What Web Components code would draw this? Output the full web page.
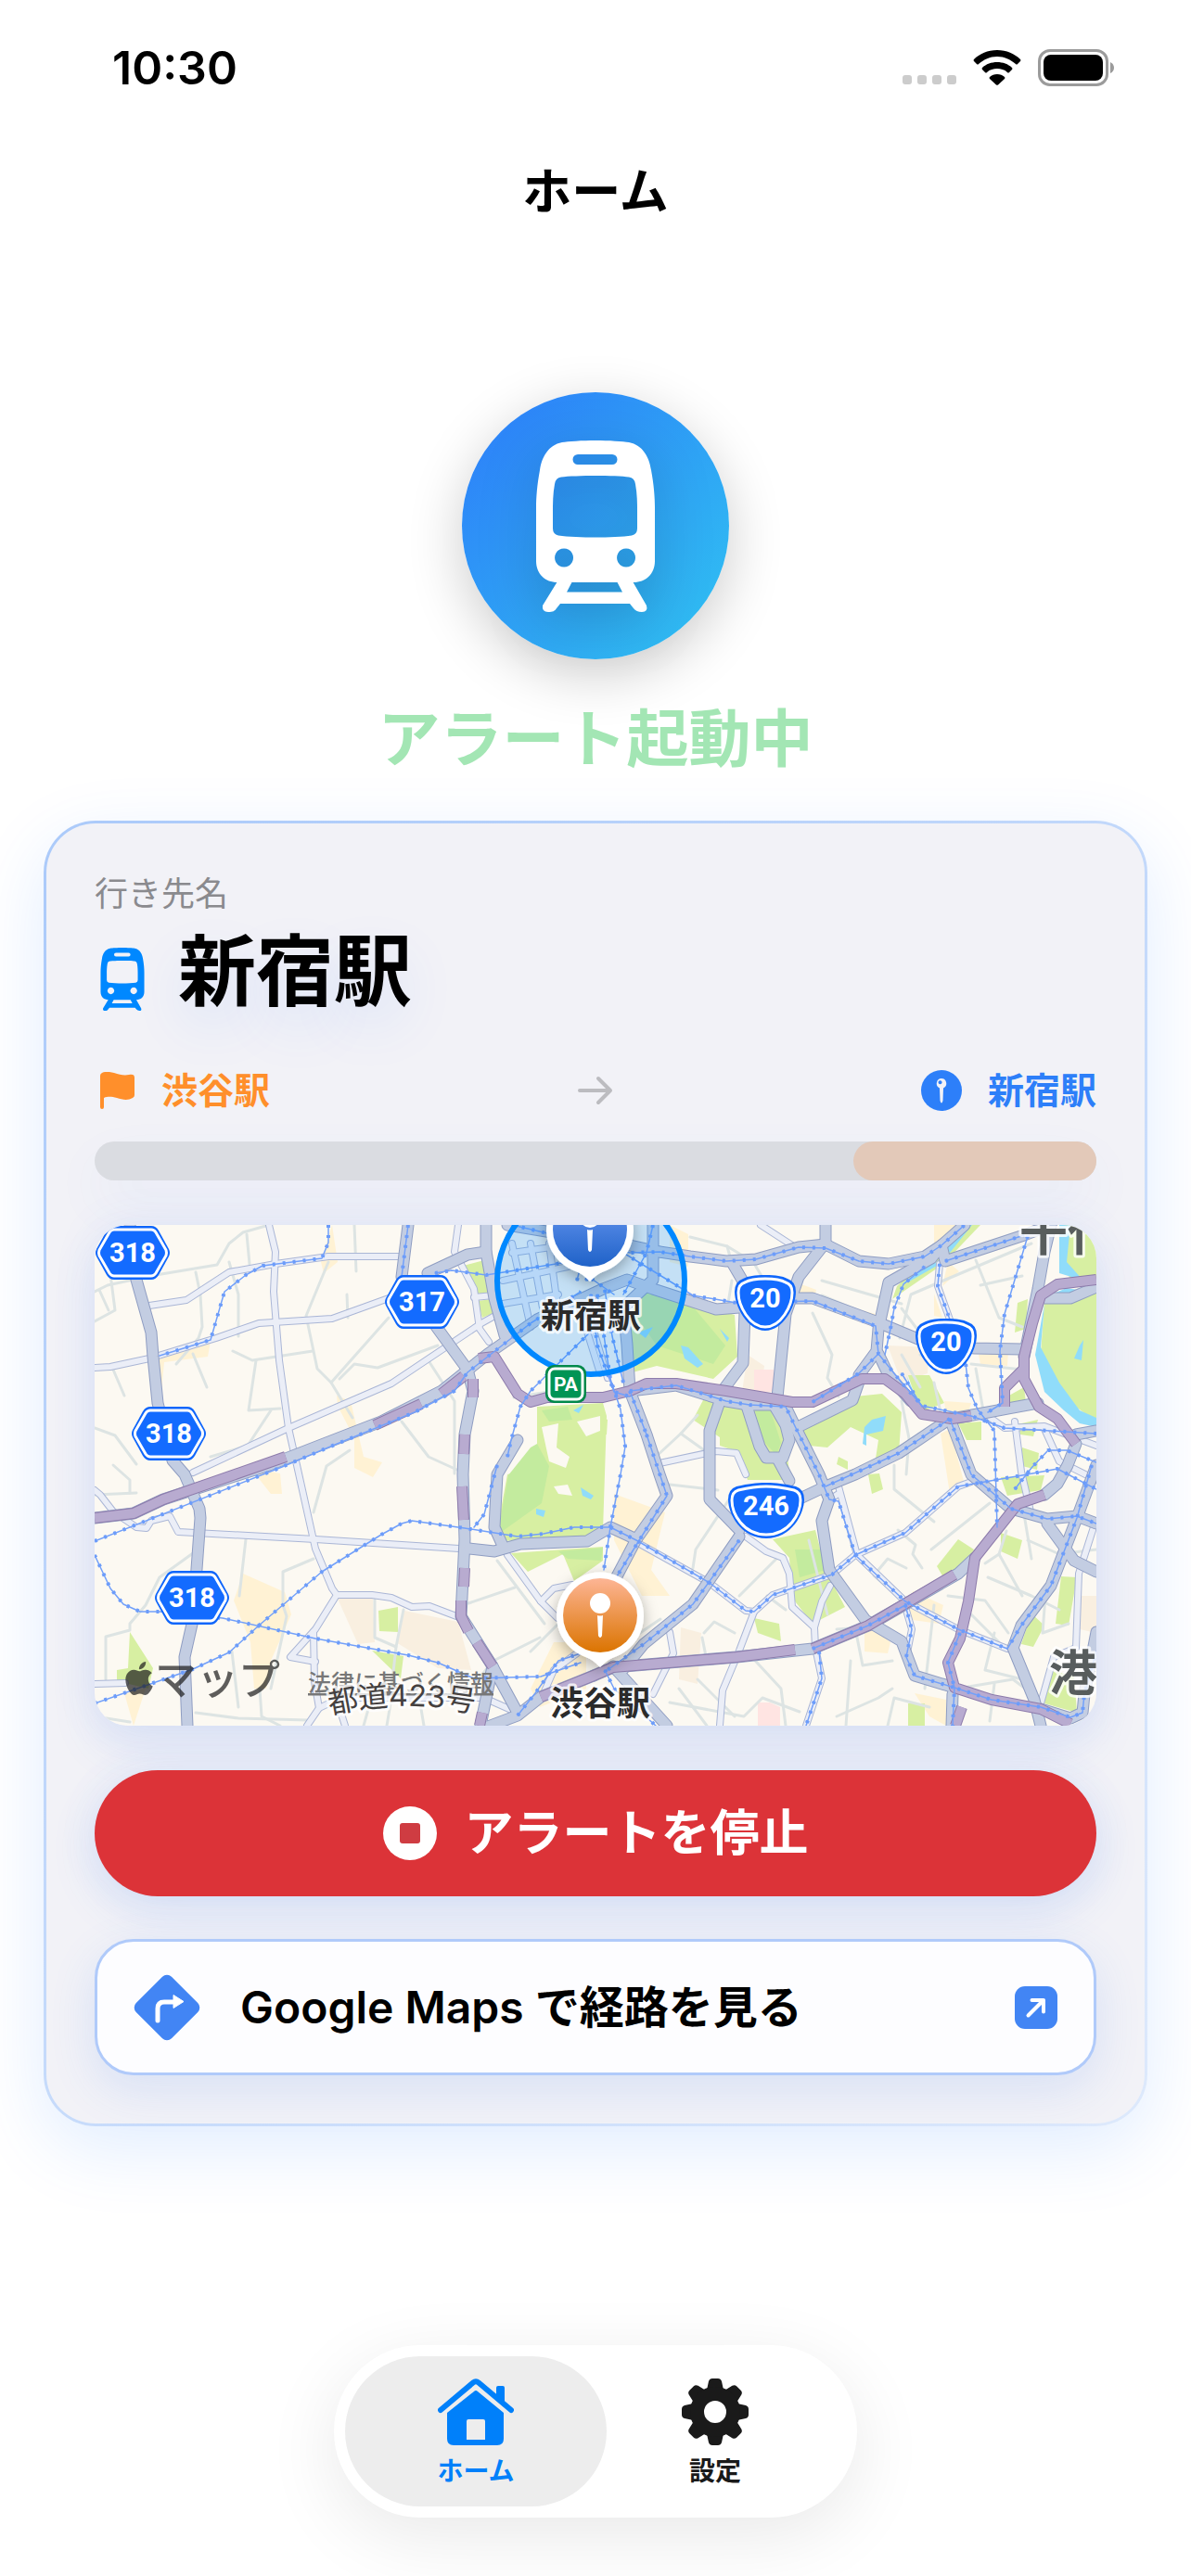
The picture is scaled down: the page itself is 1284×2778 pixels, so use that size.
<!DOCTYPE html>
<html lang="ja">
<head>
<meta charset="UTF-8">
<meta name="viewport" content="width=device-width, initial-scale=1">
<title>ホーム</title>
<style>
    body{
        margin: 0;
        min-height: 100vh;
        display: flex;
        flex-direction: column;
        background: #fff;
        color: #000;
        font-family: Inter, "Noto Sans CJK JP", sans-serif;
    }
    main{
        display: flex;
        flex-direction: column;
        align-items: center;
    }
    alert-hero{
        margin-top: 186px;
    }
    trip-card{
        align-self: stretch;
        margin: 46px 47px 0;
    }
    tab-bar{
        margin: auto auto 63px;
    }
</style>
</head>
<body>
    <status-bar time="10:30"></status-bar>
    <page-title>ホーム</page-title>
    <main>
        <alert-hero>アラート起動中</alert-hero>
        <trip-card>
            <destination-name label="行き先名">新宿駅</destination-name>
            <route-progress from="渋谷駅" to="新宿駅"></route-progress>
            <route-map from="渋谷駅" to="新宿駅"></route-map>
            <stop-button>アラートを停止</stop-button>
            <maps-link href="#route">Google Maps で経路を見る</maps-link>
        </trip-card>
    </main>
    <tab-bar>
        <tab-item icon="home" active>ホーム</tab-item>
        <tab-item icon="gear">設定</tab-item>
    </tab-bar>

<script>
const ICONS = {
    train: `
        <svg viewBox="0 0 128 185" fill="currentColor" aria-hidden="true">
            <path fill-rule="evenodd" d="M64 0C78 0 94 1 100 2C115 5 122 18 124 32C127 48 128 62 128 72V130C128 144 118 153 105 153H23C10 153 0 144 0 130V72C0 62 1 48 4 32C6 18 13 5 28 2C34 1 50 0 64 0ZM45 15a5.500 5.500 0 0 0 0 11H82a5.500 5.500 0 0 0 0-11ZM64 38C50 38 34 38.500 27 39.500Q21 40 20 47C18 58 18 68 18 76V95Q18 101 24 102.500C34 104 50 104.500 64 104.500S94 104 103 102.500Q109 101 109 95V76C109 68 109 58 107 47Q106 40 100 39.500C94 38.500 78 38 64 38ZM30 116.500a10 10 0 1 0 .1 0ZM97 116.500a10 10 0 1 0 .1 0Z"/>
            <path d="M23 152L7 178Q6 185 13 185C18 185 20 184 22 181L26 176H101L105 181Q108 185 114 185Q121 185 119 178L104 152H87L93 163.500H33L39 152Z"/>
        </svg>`,
    flag: `
        <svg viewBox="0 0 38 40" fill="currentColor" aria-hidden="true">
            <path d="M0 4Q0 2 2 1C6-1 11 0 15 1C21 3 26 4 31 3C35 2 37 3 37 6V25Q37 27 35 28C30 31 24 30 18 28C13 27 9 26 4 28V38Q4 40 2 40T0 38Z"/>
        </svg>`,
    arrow: `
        <svg viewBox="0 0 38 32" fill="none" stroke="currentColor" stroke-width="4" stroke-linecap="round" stroke-linejoin="round" aria-hidden="true">
            <path d="M2 16H35M22 3L35 16L22 29"/>
        </svg>`,
    pin: `
        <svg viewBox="0 0 44 44" aria-hidden="true">
            <circle cx="22" cy="22" r="22" fill="currentColor"/>
            <path fill="#f2f2f7" fill-rule="evenodd" d="M22 9a5.500 5.500 0 0 1 2 10.500L23.500 33Q22 38 20.500 33L20 19.500A5.500 5.500 0 0 1 22 9ZM20.500 11.300a2 2 0 1 0 .1 0Z"/>
        </svg>`,
    stop: `
        <svg viewBox="0 0 58 58" aria-hidden="true">
            <circle cx="29" cy="29" r="29" fill="#fff"/>
            <rect x="18" y="18" width="22" height="22" rx="3" fill="#cf3c42"/>
        </svg>`,
    directions: `
        <svg viewBox="0 0 74 74" aria-hidden="true">
            <rect x="10" y="10" width="54" height="54" rx="7" fill="#4285f4" transform="rotate(45 37 37)"/>
            <path d="M27 51V38Q27 31 34 31H44" fill="none" stroke="#fff" stroke-width="5" stroke-linecap="round"/>
            <path d="M44 23.500L55 30.500L44 37.500Z" fill="#fff" stroke="#fff" stroke-linejoin="round"/>
        </svg>`,
    open: `
        <svg viewBox="0 0 46 46" aria-hidden="true">
            <rect width="46" height="46" rx="11" fill="#4285f4"/>
            <path d="M14.500 31.500L31 15M18.500 15H31V27.500" fill="none" stroke="#fff" stroke-width="4" stroke-linecap="round" stroke-linejoin="round"/>
        </svg>`,
    home: `
        <svg viewBox="0 0 82 72" fill="currentColor" aria-hidden="true">
            <path d="M3 34L38 4.500Q41 2 44 4.500L79 34" fill="none" stroke="currentColor" stroke-width="6" stroke-linecap="round"/>
            <path d="M63 22V10Q63 8 65 8H70Q72 8 72 10V30Z"/>
            <path fill-rule="evenodd" d="M39 14Q41 12 43 14L71 37V65Q71 72 64 72H17Q10 72 10 65V37ZM33 44Q31 44 31 46V66H51V46Q51 44 49 44Z"/>
        </svg>`,
    gear: `
        <svg viewBox="-36 -36 72 72" fill="currentColor" aria-hidden="true">
            ${[0, 45, 90, 135, 180, 225, 270, 315].map(a => `<path transform="rotate(${a})" d="M-12 -20Q-9 -23 -8.500 -26L-7 -33Q-6 -36 -3 -36H3Q6 -36 7 -33L8.500 -26Q9 -23 12 -20Z"/>`).join('')}
            <circle r="19.500" fill="none" stroke="currentColor" stroke-width="15"/>
        </svg>`
}

// puntos de las calles, en el sistema 1080x540 del mapa
const STREETS = [
    '0,72 14,65 60,55 132,43 145,20 160,8 188,0', '16,45 22,92 0,104', '5,70 15,92', '109,51 114,75 116,110 112,122 88,150',
    '164,10 167,42', '145,40 155,75 155,120', '280,0 282,50', '252,40 228,98 240,155 255,170 278,208', '272,75 273,100',
    '317,100 255,170', '149,136 170,146 235,136', '174,146 166,200 200,198', '264,166 280,150 305,154 370,130',
    '106,139 121,175', '20,156 32,184', '125,250 165,238 190,200', '331,212 360,250 395,266', '0,219 22,227 45,258',
    '275,243 250,260 236,310', '361,148 388,190 388,268', '163,339 156,400', '106,354 70,380 55,410 38,430 38,437 12,444 12,490',
    '236,360 203,374 203,410 207,422 190,500', '148,460 155,520', '302,402 302,445 325,455 333,415', '325,455 320,500',
    '0,530 38,536', '109,526 155,532 230,534', '178,500 180,530 200,540', '300,505 290,540', '320,510 315,540', '350,510 355,540',
    '403,408 453,391', '434,362 485,430', '405,500 430,470 480,445', '500,430 470,460', '452,186 520,175',
    '642,13 682,23 710,40 722,60', '682,23 687,42', '687,60 682,90', '784,76 850,104', '784,60 870,85', '774,95 795,140 790,165 802,185',
    '868,122 880,75 915,60 1010,20', '870,90 900,130', '950,38 975,100 1000,110', '955,65 1000,55', '890,140 930,125',
    '945,150 1000,156', '950,155 958,200', '870,140 890,175', '905,170 915,215', '605,250 632,225 660,245', '632,225 650,205',
    '870,190 878,230 875,269', '862,259 862,285 905,320', '866,329 885,345 882,355 892,370', '902,350 965,300', '960,365 975,355 1000,400',
    '866,400 840,378 855,360 875,370', '770,340 790,420', '620,280 672,286', '645,370 648,350 688,290', '695,400 735,360',
    '657,440 668,428 690,440', '655,445 660,470', '905,410 895,500', '920,400 960,405 985,440', '963,380 1010,400 1040,415',
    '945,420 975,450', '800,436 830,434', '1006,340 1040,355 1080,350', '983,330 975,355', '1025,400 1022,440 1050,430',
    '630,500 660,540', '650,490 690,530', '620,515 700,530 720,510 760,525', '815,470 810,540', '820,435 828,475 860,470',
    '860,500 845,510 800,530', '855,540 862,510 900,520', '930,500 990,490 1010,505', '970,495 965,535', '703,460 740,500 745,540',
    '745,415 725,400', '588,440 610,425', '1000,300 1010,360', '970,440 960,480 1000,490', '0,291 45,289', '20,259 38,275 38,289'
]

const LANES = [
    '59,87 99,81 145,51 195,42 252,34 327,34', '0,154 17,153 59,144 131,122 177,106 256,101 317,79',
    '188,0 195,29 193,72 199,146 209,219 218,259 238,349 256,392 261,399 238,436 211,466 238,471',
    '236,439 237,492 242,521 229,540', '242,521 265,510 420,510 456,526', '106,267 209,219 320,171 417,106 435,96',
    '392,0 388,29 409,69 415,112 425,126', '409,78 430,76', '0,286 6,291 20,309 45,326 56,327 61,319 81,314 90,331 238,339 393,349',
    '261,399 299,399 320,402 342,412 361,411 390,422', '0,495 33,494', '445,356 481,406 499,424', '481,406 495,392 515,388',
    '262,515 270,540', '584,342 663,386 702,416 711,417 731,399 795,377 820,356 874,332 931,282 945,277',
    '702,336 724,352 742,359 749,376 752,412 776,434 777,456 784,489 767,540', '776,434 784,406 793,389',
    '802,282 822,356 874,406 931,436 984,457', '711,417 695,459 677,502 674,540', '911,42 909,66 922,102',
    '963,206 981,219 1024,217 1080,238', '992,212 999,266 1009,309', '1077,326 1061,376 1058,456 1034,466 1020,516',
    '609,257 670,244 692,246 702,269', '874,412 881,436 875,466', '718,0 752,22', '620,439 624,462 602,506',
    '481,512 495,480 520,462', '1024,220 1040,255 1080,275', '450,20 470,110', '470,20 485,100', '490,20 500,95',
    '440,60 510,45', '440,85 500,75', '450,30 520,20', '520,80 545,160', '528,80 553,165', '792,296 802,290'
]

const ROADS = [
    '38,0 45,59 61,116 63,142 68,192 84,254 97,269 113,306 114,316 106,426 97,466 100,540',
    '338,0 331,56 370,112 402,156 408,179 399,226 397,269 399,339 395,422 429,476 425,496 416,540', '429,476 456,526',
    '0,316 42,311 74,296 188,259 309,212 374,179 424,139 477,102 548,69 574,59 602,69 670,91 695,89 752,79 774,79 842,104 895,126 949,133 999,134',
    '577,179 627,173 681,190 705,194 745,194', '924,209 963,202 1017,192',
    '609,29 642,34 681,39 713,37 759,24 788,21 824,39 856,42 895,34 913,22 938,0',
    '422,0 422,29 431,79 442,119', '359,52 402,32 422,29', '445,0 577,22 609,29',
    '602,0 602,59 570,89 574,129 577,179 595,226 609,269 617,292 584,339 563,379 560,420',
    '788,0 788,19 759,56 745,96 736,186', '688,42 702,66 699,149 679,176 663,222 663,296 695,329',
    '695,336 645,409 592,452 570,479', '702,192 717,239 724,251 742,251 749,232 745,216 731,192', '736,252 749,276',
    '745,196 756,219 781,269 792,296 784,319 792,372 831,426 870,449 884,486 927,499', '756,219 817,189 824,169',
    '922,209 867,246 820,269 788,282 750,300', '922,209 945,269 988,306 1027,317 1059,314 1080,322',
    '1080,259 1059,316 1031,389 999,432 990,456 1013,512 1020,540', '1027,322 1056,362 1080,374',
    '925,506 924,540', '1020,522 1052,532 1065,526 1067,506 1080,439',
    '913,22 902,36 856,62 845,112 843,136 824,162', '845,139 856,162 880,190', '913,22 917,39 1002,11 1031,0',
    '1031,0 1024,29 1017,69 1002,142', '1024,79 1052,79 1080,67', '1058,226 1080,222',
    '1058,236 1049,259 1038,279 1024,291', '404,349 431,352 459,344 531,341 556,326 584,339',
    '456,232 434,269 431,326 440,346', '559,476 617,540', '416,544 456,529 481,509 538,486',
    '538,486 559,477 692,466 774,457 834,432 931,376 949,359'
]

const EXPRESSWAYS = [
    '0,316 42,311 74,296 206,250', '302,216 352,193', '374,182 398,163', '414,144 431,142 456,182 470,191 488,186 548,186 577,179 595,171 627,171 681,179 752,191 774,191 827,166 852,166 874,182 892,204 924,209 945,206',
    '408,166 408,186', '399,226 398,247', '396,282 398,318', '399,370 398,390', '395,405 395,422 403,438', '412,450 429,476',
    '1080,59 1038,64 1020,76 1011,106 1002,142 1002,166 1018,196 1038,209 1058,236',
    '1024,291 995,301 949,359 942,406 933,446 920,472 927,499 967,512 1020,522 1052,538',
    '481,509 538,486 559,477 692,466 755,458', '774,457 834,432 927,377', '981,196 981,176 1002,155', '935,520 928,540', '418,526 415,540'
]

const RAILS = [
    '252,0 252,19 245,36 181,44 163,54 140,72 125,124 70,141', '0,341 202,261 259,237 345,202 388,179 402,159 470,106 524,72',
    '0,356 17,392 31,409 49,417 70,417 138,424 238,446 338,464 370,472 409,489 481,487 524,472',
    '0,516 106,479 145,461 177,432 245,374 309,334 331,322 342,319 399,327 456,336 484,333 517,326 556,326 584,340 663,386 702,416 711,417 731,399 795,377 820,356 874,332 931,282 1000,270 1038,263 1080,285',
    '338,0 331,56', '367,52 385,49 422,54 510,40 560,75', '445,250 449,232 459,196 470,179 548,102', '434,259 420,312 409,326',
    '450,0 577,30 609,29 642,34 681,39 713,37 759,24 788,25 824,39 856,42 895,34 913,22 938,0',
    '542,75 548,112 556,166 567,199 572,239 567,269 556,326 549,372', '535,75 542,130 560,180 577,185', '550,70 558,120 570,170',
    '602,0 595,30 570,75', '570,30 645,76 692,84 774,82 842,109 845,139 870,170 892,195 945,206 981,219 1080,225',
    '577,179 627,173 681,190 706,194 745,196 756,219 781,269 792,296 802,298 820,356 874,406 931,436 984,457',
    '595,226 617,292 563,379', '695,340 645,409 592,452 550,482', '577,179 595,226',
    '917,39 1002,11', '911,42 909,66 922,102', '1006,12 981,96 976,136 979,192 963,202', '938,139 942,176 952,199 970,222 973,326',
    '922,209 945,269 988,306 1027,317 1059,314 1080,322', '922,209 867,246 788,282', '1075,259 1059,316 1031,389 999,432 984,457',
    '933,440 920,472 927,499 967,512 1020,520 1052,531 1065,526 1067,506 1080,460', '774,457 834,432 874,410 881,436 875,466 884,486 927,499 925,540',
    '781,460 784,489 767,540', '895,45 872,64 862,90 858,112 852,140', '870,160 892,196', '992,285 1010,262 1028,243 1048,243 1080,256',
    '774,191 824,160 845,139', '456,529 475,505 500,470 530,460', '550,480 560,500 605,540', '520,60 535,0', '530,60 550,0'
]

const PARKS = [
    '477,196 548,192 552,206 548,330 531,336 438,341 434,329 445,269 456,266 477,252', '449,354 548,347 548,362 517,384 505,355 467,374',
    '592,69 690,97 693,142 667,166 606,152 580,159 570,110', '656,189 740,192 750,275 704,275 692,244 674,238 674,229 645,210',
    '759,226 788,199 820,185 849,182 870,202 867,246 842,252 845,232 815,218 790,240 770,238', '1024,82 1080,72 1080,212 1052,192 1020,139',
    '1040,0 1080,0 1080,66 1052,62 1045,30', '731,339 777,329 788,372 809,412 774,430 752,402 749,359', '711,424 738,430 740,449 715,440',
    '931,339 948,350 940,366 915,380 908,368', '977,332 1000,340 995,360 977,352', '1042,379 1059,380 1050,432 1036,430',
    '1010,419 1024,432 1012,455 999,452', '1028,480 1056,486 1059,526 1024,516', '977,272 1024,270 1020,286 984,292', '877,516 895,516 895,540 877,540',
    '834,269 846,268 850,285 838,290', '306,416 327,412 327,439 307,438', '38,439 63,478 58,500 24,492 24,480 36,478', '299,459 333,465 330,489',
    '397,44 420,38 426,74 412,74', '413,82 428,80 430,95 418,100', '877,162 900,162 916,192 890,202', '995,84 1006,80 1004,112 992,116',
    '984,185 1002,175 1004,192 984,194', '931,214 956,212 956,232 940,232', '995,215 1017,210 1012,228 998,226', '1000,240 1018,246 1016,264 1000,260',
    '538,204 553,210 552,226 538,228', '935,0 955,0 915,42 860,80 865,66', '802,250 812,255 812,264 800,258'
]

const WOODS = [
    '477,236 490,260 482,300 440,330 436,326 446,270 470,240', '592,69 640,82 680,130 667,150 606,130 585,100', '712,200 728,198 740,235 735,248 720,232',
    '755,350 785,350 788,372 760,380', '500,352 548,348 546,362 510,360', '482,200 510,196 515,210 490,212'
]

const WATER = [
    '1024,85 1014,140 1024,180 1045,200 1062,214 1080,218 1080,208 1062,200 1040,170 1020,132', '1040,0 1052,0 1048,40 1066,60 1040,52',
    '632,130 640,132 656,150 650,154 636,144', '674,112 684,122 682,126', '830,218 838,210 853,206 850,222 832,226 832,238 828,236',
    '937,0 946,0 922,30 918,24', '905,36 870,64 880,60 908,44', '1062,130 1066,124 1064,146 1056,144', '516,200 527,194 522,203', '524,283 538,292 535,296 526,292',
    '476,306 486,308 484,315 476,312', '1024,78 1048,68 1060,70 1040,78', '875,162 892,200 920,203 890,206', '586,116 602,110 594,122', '539,175 548,172'
]

const BUILTUP = [
    '256,0 262,40 247,52 244,40', '62,143 125,125 122,142 75,148 72,180', '261,184 276,190 290,250 310,256 300,272 280,262 280,230 262,195',
    '160,376 205,396 212,420 190,470 185,500 172,500 168,450 150,405', '168,262 200,268 202,290 190,290', '560,290 615,310 600,372 620,400 590,400 560,340',
    '495,450 530,450 530,500 480,520 470,500', '757,62 778,70 776,78 755,76', '620,0 640,10 640,45 620,40', '905,0 935,0 925,18 905,20', '920,40 932,50 914,66',
    '812,88 842,96 840,108 815,100', '905,74 914,100 905,98', '916,190 945,192 940,208 918,206', '912,225 922,220 938,280 922,290',
    '953,140 985,136 984,152 955,150', '830,430 858,450 855,462 830,460', '884,505 918,512 918,540 900,530', '882,395 915,410 910,430 875,425', '32,505 55,500 42,540'
]

const SCHOOLS = [
    '262,403 300,402 302,450 284,452', '334,416 392,428 406,480 370,478 325,450', '632,434 654,440 650,495 630,490',
    '704,140 722,152 718,180 698,180', '855,130 900,132 898,160 870,170', '1062,400 1080,400 1080,440 1062,436'
]

const lines = (list) => list.map(points => `<polyline points="${points}"/>`).join('')
const areas = (list) => list.map(points => `<polygon points="${points}"/>`).join('')

class AppElement extends HTMLElement {

    constructor(){
        super();
        this.attachShadow({mode:'open'});
    }
    getTemplate(){
        const template = document.createElement('template')
        template.innerHTML = `${this.getMarkup()}<style>${this.getStyles()}</style>`;
        return template;
    }
    attr(name){
        return this.getAttribute(name) || ''
    }
    render(){
        this.shadowRoot.replaceChildren(this.getTemplate().content.cloneNode(true))
    }
    connectedCallback(){
        this.render();
    }
}

class StatusBar extends AppElement {

    getMarkup(){
        return `
            <time>${this.attr('time')}</time>
            <div class="icons">
                <svg width="58" height="40" viewBox="0 0 58 40" fill="#ccc" aria-hidden="true">
                    <rect y="28" width="10" height="10" rx="3"/>
                    <rect x="16" y="28" width="10" height="10" rx="3"/>
                    <rect x="32" y="28" width="10" height="10" rx="3"/>
                    <rect x="48" y="28" width="10" height="10" rx="3"/>
                </svg>
                <svg width="52" height="40" viewBox="0 0 52 40" aria-hidden="true">
                    <path d="M26 1C36 1 45 5 51 11Q52 12 51 13L48 16Q47 17 46 16C40 11 34 8 26 8S12 11 6 16Q5 17 4 16L1 13Q0 12 1 11C7 5 16 1 26 1Z"/>
                    <path d="M26 14C32 14 38 16 42 20Q43 21 42 22L39 25Q38 26 37 25C34 22 30 21 26 21S18 22 15 25Q14 26 13 25L10 22Q9 21 10 20C14 16 20 14 26 14Z"/>
                    <path d="M26 27C29 27 32 28 34 30Q35 31 34 32L27 38.500Q26 39 25 38.500L18 32Q17 31 18 30C20 28 23 27 26 27Z"/>
                </svg>
                <svg width="82" height="40" viewBox="0 0 82 40" aria-hidden="true">
                    <rect x="1.500" y="1.500" width="73" height="37" rx="11.500" fill="none" stroke="#9b9b9b" stroke-width="3"/>
                    <rect x="6" y="6" width="64" height="28" rx="8"/>
                    <path d="M78 14Q82 16 82 20T78 26Z" fill="#9b9b9b"/>
                </svg>
            </div>
        `
    }
    getStyles(){
        return `
            :host{
                display: flex;
                justify-content: space-between;
                align-items: center;
                height: 64px;
                padding: 41px 83px 0 121px;
            }
            time{
                font-size: 50px;
                font-weight: 600;
                line-height: 64px;
            }
            .icons{
                display: flex;
                gap: 18px;
            }
        `
    }
}
customElements.define("status-bar", StatusBar)

class PageTitle extends AppElement {

    getMarkup(){
        return `<h1><slot></slot></h1>`
    }
    getStyles(){
        return `
            :host{
                display: block;
                padding-top: 72px;
            }
            h1{
                margin: 0;
                font-size: 53px;
                font-weight: 600;
                line-height: 60px;
                text-align: center;
            }
        `
    }
}
customElements.define("page-title", PageTitle)

class AlertHero extends AppElement {

    getMarkup(){
        return `
            <div class="badge">${ICONS.train}</div>
            <p><slot></slot></p>
        `
    }
    getStyles(){
        return `
            :host{
                display: flex;
                flex-direction: column;
                align-items: center;
                gap: 44px;
            }
            .badge{
                display: grid;
                place-items: center;
                width: 288px;
                height: 288px;
                border-radius: 50%;
                color: #fff;
                background: linear-gradient(135deg, #2d7ff9 5%, #30c0f2 95%);
                box-shadow: 0 16px 60px rgba(0,0,0,.2);
            }
            svg{
                width: 128px;
                height: 185px;
                filter: drop-shadow(0 16px 30px rgba(0,0,0,.2));
            }
            p{
                margin: 0;
                color: #a3e6b4;
                font-size: 67px;
                font-weight: 600;
                line-height: 84px;
            }
        `
    }
}
customElements.define("alert-hero", AlertHero)

class TripCard extends AppElement {

    getMarkup(){
        return `<slot></slot>`
    }
    getStyles(){
        return `
            :host{
                display: flex;
                flex-direction: column;
                padding: 52px;
                border: 3px solid transparent;
                border-radius: 56px;
                background:
                    linear-gradient(#f2f2f7, #f2f2f7) padding-box,
                    linear-gradient(135deg, #abcafa, #dde9fc) border-box;
                box-shadow: 0 24px 80px rgba(0,110,255,.12);
            }
            ::slotted(route-progress){
                margin-top: 56px;
            }
            ::slotted(route-map){
                margin-top: 48px;
            }
            ::slotted(stop-button){
                margin-top: 48px;
            }
            ::slotted(maps-link){
                margin-top: 46px;
            }
        `
    }
}
customElements.define("trip-card", TripCard)

class DestinationName extends AppElement {

    getMarkup(){
        return `
            <span class="label">${this.attr('label')}</span>
            <h2>${ICONS.train}<slot></slot></h2>
        `
    }
    getStyles(){
        return `
            :host{
                display: flex;
                flex-direction: column;
            }
            .label{
                color: #8a8a8e;
                font-size: 36px;
                line-height: 48px;
            }
            h2{
                display: flex;
                align-items: center;
                gap: 36px;
                margin: 12px 0 0;
                padding-left: 6px;
                font-size: 84px;
                font-weight: 700;
                line-height: 96px;
                text-shadow: 0 24px 60px rgba(0,100,255,.1);
            }
            svg{
                width: 48px;
                height: 68px;
                padding-top: 16px;
                color: #0088ff;
            }
        `
    }
}
customElements.define("destination-name", DestinationName)

class RouteProgress extends AppElement {

    getMarkup(){
        return `
            <div class="stations">
                <span class="station station--from">${ICONS.flag}${this.attr('from')}</span>
                <span class="arrow">${ICONS.arrow}</span>
                <span class="station station--to">${ICONS.pin}${this.attr('to')}</span>
            </div>
            <div class="track" role="progressbar" aria-label="進行状況"><div class="track__fill"></div></div>
        `
    }
    getStyles(){
        return `
            :host{
                display: flex;
                flex-direction: column;
                gap: 31px;
            }
            .stations{
                display: grid;
                grid-template-columns: 1fr auto 1fr;
                align-items: center;
            }
            .station{
                display: flex;
                align-items: center;
                gap: 28px;
                font-size: 39px;
                font-weight: 600;
                line-height: 48px;
            }
            .station--from{
                padding-left: 6px;
                color: #ff8f2b;
            }
            .station--from svg{
                width: 38px;
                height: 40px;
            }
            .station--to{
                justify-content: flex-end;
                color: #2d7ff9;
            }
            .station--to svg{
                width: 44px;
                height: 44px;
            }
            .arrow{
                display: flex;
                color: #bcbcc0;
            }
            .arrow svg{
                width: 38px;
                height: 32px;
            }
            .track{
                display: flex;
                justify-content: flex-end;
                height: 42px;
                border-radius: 21px;
                background: #dadce1;
                box-shadow: 0 24px 60px rgba(60,120,240,.06);
            }
            .track__fill{
                width: 24.3%;
                border-radius: 21px;
                background: #e3c9b9;
            }
        `
    }
}
customElements.define("route-progress", RouteProgress)

class RouteMap extends AppElement {

    getHexShield(x, y, number){
        return `
            <g transform="translate(${x} ${y})">
                <path d="M-20 -29H20Q25 -29 28 -24L39 -4Q41 0 39 4L28 24Q25 29 20 29H-20Q-25 29 -28 24L-39 4Q-41 0 -39 -4L-28 -24Q-25 -29 -20 -29Z" fill="#0f66fb"/>
                <path d="M-20 -25H20Q23 -25 25 -22L36 -3Q37 0 36 3L25 22Q23 25 20 25H-20Q-23 25 -25 22L-36 3Q-37 0 -36 -3L-25 -22Q-23 -25 -20 -25Z" fill="#136bff" stroke="#fff" stroke-width="3"/>
                <text y="10">${number}</text>
            </g>`
    }
    getRouteShield(x, y, number, w){
        return `
            <g transform="translate(${x} ${y})">
                <path d="M0 -30C12 -30 18 -29 ${w - 9} -26Q${w} -23 ${w} -12C${w} 4 ${w - 14} 30 0 30S-${w} 4 -${w} -12Q-${w} -23 -${w - 9} -26C-18 -29 -12 -30 0 -30Z" fill="#0f66fb"/>
                <path d="M0 -26C11 -26 17 -25 ${w - 11} -22Q${w - 4} -20 ${w - 4} -11C${w - 4} 3 ${w - 16} 26 0 26S-${w - 4} 3 -${w - 4} -11Q-${w - 4} -20 -${w - 11} -22C-17 -25 -11 -26 0 -26Z" fill="#136bff" stroke="#fff" stroke-width="3"/>
                <text y="5">${number}</text>
            </g>`
    }
    getPin(x, y, fill){
        return `
            <g transform="translate(${x} ${y})">
                <path d="M0 56C-5 51 -9 47 -18 44A47 47 0 1 1 18 44C9 47 5 51 0 56Z" fill="#fff" filter="url(#shadow)"/>
                <circle r="40" fill="url(#${fill})"/>
                <circle cy="-13" r="11" fill="#fff"/>
                <path d="M-3 0Q0 1 3 0L2 22Q0 26 -2 22Z" fill="#fff"/>
            </g>`
    }
    getMarkup(){
        return `
            <svg class="map" viewBox="0 0 1080 540" role="img" aria-label="地図">
                <defs>
                    <linearGradient id="blue" x2="0" y2="1"><stop stop-color="#6f9cf5"/><stop offset="1" stop-color="#1f62c8"/></linearGradient>
                    <linearGradient id="orange" x2="0" y2="1"><stop stop-color="#fdb595"/><stop offset="1" stop-color="#db7400"/></linearGradient>
                    <filter id="shadow" x="-40%" y="-40%" width="180%" height="180%"><feDropShadow dx="0" dy="5" stdDeviation="8" flood-opacity=".3"/></filter>
                    <path id="road423" d="M254 528Q333 509 424 529"/>
                </defs>
                <rect width="1080" height="540" fill="#fcf9f2"/>
                <g fill="#fff2d4">${areas(BUILTUP)}</g>
                <g fill="#f9efe0">${areas(SCHOOLS)}</g>
                <g fill="#ffe4e2"><path d="M711 156H732V180H711ZM715 515H728L739 520V540H715Z"/></g>
                <g fill="#d7efa2">${areas(PARKS)}</g>
                <g fill="#c3eb9e">${areas(WOODS)}</g>
                <g fill="#fcf9f2"><path d="M482 218L500 214L498 240L512 250L508 262L490 255ZM520 212L545 206V222L530 228ZM495 282L510 280L515 292L500 290Z"/></g>
                <g fill="#90dcfa">${areas(WATER)}</g>
                <g class="lines" stroke="#dde4e3" stroke-width="3">${lines(STREETS)}</g>
                <g class="lines" stroke="#aab6d6" stroke-width="8">${lines(LANES)}</g>
                <g class="lines" stroke="#ebeef7" stroke-width="6">${lines(LANES)}</g>
                <g class="lines" stroke="#8f9dc2" stroke-width="13">${lines(ROADS)}</g>
                <g class="lines" stroke="#c3cde2" stroke-width="11">${lines(ROADS)}</g>
                <g class="lines lines--flat" stroke="#8d7bab" stroke-width="12">${lines(EXPRESSWAYS)}</g>
                <g class="lines lines--flat" stroke="#b8abd0" stroke-width="10">${lines(EXPRESSWAYS)}</g>
                <g class="lines" stroke="#72a0fa" stroke-width="1.500">${lines(RAILS)}</g>
                <g class="lines lines--flat" stroke="#6c9cfa" stroke-width="4" stroke-dasharray="3 8">${lines(RAILS)}</g>

                <circle cx="535" cy="60" r="101" fill="#0088ff" fill-opacity=".22" stroke="#0088ff" stroke-width="6"/>

                <g class="shields">
                    ${this.getHexShield(41, 30, 318)}
                    ${this.getHexShield(353, 83, 317)}
                    ${this.getHexShield(80, 225, 318)}
                    ${this.getHexShield(105, 402, 318)}
                    ${this.getRouteShield(723, 84, 20, 33)}
                    ${this.getRouteShield(918, 131, 20, 33)}
                    ${this.getRouteShield(724, 308, 246, 41)}
                    <rect x="486" y="151" width="44" height="41" rx="9" fill="#00894b"/>
                    <rect x="490" y="155" width="36" height="33" rx="6" fill="#009455" stroke="#fff" stroke-width="3"/>
                    <text class="pa" x="508" y="179">PA</text>
                </g>

                <text class="ward" x="997" y="28">千代田区</text>
                <text class="ward" x="1029" y="502">港区</text>
                ${this.getPin(534, 5, 'blue')}
                ${this.getPin(545, 421, 'orange')}
                <text class="station" x="535" y="111">${this.attr('to')}</text>
                <text class="station" x="545" y="529">${this.attr('from')}</text>

                <g class="brand">
                    <path transform="translate(30 471) scale(1.500)" d="M12.152 6.896c-.948 0-2.415-1.078-3.960-1.040-2.040.027-3.910 1.183-4.961 3.014-2.117 3.675-.546 9.103 1.519 12.090 1.013 1.454 2.208 3.090 3.792 3.039 1.520-.065 2.090-.987 3.935-.987 1.831 0 2.350.987 3.960.948 1.637-.026 2.676-1.480 3.676-2.948 1.156-1.688 1.636-3.325 1.662-3.415-.039-.013-3.182-1.221-3.220-4.857-.026-3.040 2.480-4.494 2.597-4.559-1.429-2.090-3.623-2.324-4.390-2.376-2-.156-3.675 1.090-4.610 1.090zM15.530 3.830c.843-1.012 1.400-2.427 1.245-3.830-1.207.052-2.662.805-3.532 1.818-.780.896-1.454 2.338-1.273 3.714 1.338.104 2.715-.688 3.559-1.701"/>
                    <text x="65" y="507">マップ</text>
                </g>
                <a href="#legal"><text class="legal" x="230" y="503">法律に基づく情報</text></a>
                <text class="road"><textPath href="#road423">都道423号</textPath></text>
            </svg>
        `
    }
    getStyles(){
        return `
            :host{
                display: block;
                border-radius: 36px;
                box-shadow: 0 24px 50px rgba(60,120,240,.1), 0 0 50px rgba(60,120,240,.08);
            }
            .map{
                display: block;
                width: 100%;
                border-radius: 36px;
                font-family: Inter, "Noto Sans CJK JP", sans-serif;
            }
            .lines{
                fill: none;
                stroke-linejoin: round;
                stroke-linecap: round;
            }
            .lines--flat{
                stroke-linecap: butt;
            }
            .shields text{
                fill: #fff;
                font-family: Roboto, sans-serif;
                font-size: 29px;
                font-weight: 700;
                text-anchor: middle;
            }
            .shields .pa{
                font-size: 21px;
            }
            .station, .ward, .road{
                paint-order: stroke;
                stroke: rgba(255,255,255,.8);
                stroke-width: 6px;
                stroke-linejoin: round;
            }
            .station{
                fill: #2b2b2b;
                font-size: 36px;
                font-weight: 600;
                text-anchor: middle;
            }
            .ward{
                fill: #585d5d;
                font-size: 52px;
                font-weight: 700;
            }
            .brand{
                fill: #1c1c1c;
                opacity: .7;
                font-size: 45px;
                font-weight: 500;
            }
            .legal{
                fill: #777;
                font-size: 25px;
                font-weight: 500;
                text-decoration: underline;
            }
            .road{
                fill: #44403f;
                font-size: 32px;
            }
        `
    }
}
customElements.define("route-map", RouteMap)

class StopButton extends AppElement {

    getMarkup(){
        return `<button type="button">${ICONS.stop}<span><slot></slot></span></button>`
    }
    getStyles(){
        return `
            :host{
                display: block;
            }
            button{
                display: flex;
                align-items: center;
                justify-content: center;
                gap: 30px;
                width: 100%;
                height: 136px;
                border: 0;
                border-radius: 68px;
                background: #dc3338;
                color: #fff;
                font: 600 53px/64px Inter, "Noto Sans CJK JP", sans-serif;
                box-shadow: 0 16px 50px rgba(60,120,240,.14), 0 0 50px rgba(60,120,240,.06);
            }
            svg{
                width: 58px;
                height: 58px;
            }
        `
    }
}
customElements.define("stop-button", StopButton)

class MapsLink extends AppElement {

    getMarkup(){
        return `
            <a href="${this.attr('href')}">
                ${ICONS.directions}
                <span><slot></slot></span>
                ${ICONS.open}
            </a>
        `
    }
    getStyles(){
        return `
            :host{
                display: block;
            }
            a{
                display: grid;
                grid-template-columns: 74px 1fr 46px;
                align-items: center;
                gap: 42px;
                height: 141px;
                padding: 0 39px 0 38px;
                border: 3px solid #b0cafa;
                border-radius: 42px;
                background: #fdfdff;
                color: #000;
                font-size: 48px;
                font-weight: 600;
                line-height: 64px;
                text-decoration: none;
                box-shadow: 0 16px 50px rgba(60,120,240,.14);
            }
        `
    }
}
customElements.define("maps-link", MapsLink)

class TabBar extends AppElement {

    getMarkup(){
        return `<nav><slot></slot></nav>`
    }
    getStyles(){
        return `
            :host{
                display: block;
            }
            nav{
                display: flex;
                padding: 12px;
                border-radius: 93px;
                background: #fff;
                box-shadow: 0 20px 80px rgba(0,0,0,.09);
            }
            ::slotted(tab-item:not(:first-child)){
                margin-left: -24px;
            }
        `
    }
}
customElements.define("tab-bar", TabBar)

class TabItem extends AppElement {

    getMarkup(){
        return `<button type="button">${ICONS[this.attr('icon')]}<span><slot></slot></span></button>`
    }
    getStyles(){
        return `
            :host{
                display: block;
                color: #1a1a1a;
            }
            :host([active]){
                color: #0080fa;
            }
            button{
                display: flex;
                flex-direction: column;
                align-items: center;
                gap: 10px;
                width: 282px;
                height: 162px;
                padding: 24px 0 0;
                border: 0;
                border-radius: 81px;
                background: none;
                color: inherit;
                font: 600 28px/36px Inter, "Noto Sans CJK JP", sans-serif;
            }
            :host([active]) button{
                background: #ededed;
            }
            svg{
                height: 72px;
            }
        `
    }
}
customElements.define("tab-item", TabItem)
</script>
</body>
</html>
